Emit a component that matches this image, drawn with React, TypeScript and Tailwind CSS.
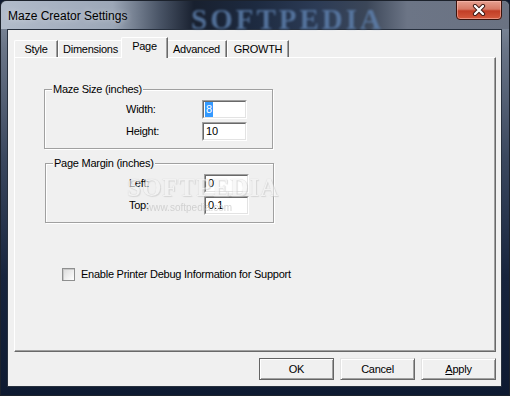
import React from 'react';

// Classic Win7 dialog: Maze Creator Settings, "Page" tab
const tabs = [
  { id: 'style', name: 'Style', w: 'w-[44px]' },
  { id: 'dim', name: 'Dimensions', w: 'w-[65px]' },
  { id: 'page', name: 'Page', w: 'w-[47px]' },
  { id: 'adv', name: 'Advanced', w: 'w-[61px]' },
  { id: 'growth', name: 'GROWTH', w: 'w-[62px]' },
];

function Field({ value, selected }: { value: string; selected?: boolean }) {
  return (
    <div className="w-[45px] h-[19px] border border-t-[#a0a0a0] border-l-[#a0a0a0] border-r-white border-b-white">
      <div className="w-full h-full border border-t-[#696969] border-l-[#696969] border-r-[#e3e3e3] border-b-[#e3e3e3] bg-white flex items-center pl-[1px] text-[11px] leading-none">
        {selected ? <span className="bg-[#3399ff] text-white px-[1px] py-[2px]">{value}</span> : <span className="px-[1px]">{value}</span>}
      </div>
    </div>
  );
}

function Row({ label, labelW, children }: { label: string; labelW: string; children: React.ReactNode }) {
  return (
    <div className="flex items-center">
      <span className={`${labelW} text-[11px] tracking-[-0.25px]`}>{label}</span>
      {children}
    </div>
  );
}

function GroupBox({ title, children, ml }: { title: string; children: React.ReactNode; ml: string }) {
  return (
    <div className={`relative ${ml} w-[229px] h-[60px] border border-[#a0a0a0] shadow-[inset_1px_1px_0_#fff,1px_1px_0_#fff]`}>
      <span className="absolute left-[7px] -top-[8px] bg-[#f0f0f0] px-[1px] text-[11px] tracking-[-0.25px] leading-[14px]">{title}</span>
      {children}
    </div>
  );
}

function Button({ label, isDefault }: { label: React.ReactNode; isDefault?: boolean }) {
  return (
    <div
      className={`w-[75px] h-[22px] flex items-center justify-center text-[11px] tracking-[-0.25px] bg-[#f0f0f0] ${
        isDefault
          ? 'border border-[#646464] shadow-[inset_1px_1px_0_#fff,inset_-1px_-1px_0_#a0a0a0]'
          : 'border border-t-[#e3e3e3] border-l-[#e3e3e3] border-r-[#696969] border-b-[#696969] shadow-[inset_1px_1px_0_#fff,inset_-1px_-1px_0_#a0a0a0]'
      }`}
    >
      {label}
    </div>
  );
}

export default function App() {
  return (
    <div className="w-[510px] h-[396px] overflow-hidden bg-[#0f1a30]">
      <div className="relative w-[510px] h-[396px] flex flex-col rounded-t-[6px] border border-[#1c222c] bg-[linear-gradient(180deg,#8a95a5_0%,#6a7587_12%,#3a475e_40%,#17243d_70%,#0e1a31_100%)] font-['Liberation_Sans',Arial,sans-serif] text-black">
        {/* title bar */}
        <div className="relative h-[28px] shrink-0 rounded-t-[6px] bg-[linear-gradient(90deg,#b2bccb_0%,#9ca7b7_22%,#4b5668_31%,#18202f_38%,#1d2a40_50%,#2c3b55_62%,#3b4658_72%,#6c7586_80%,#6a7282_100%)]">
          <span className="absolute left-[7px] top-[8px] text-[12px] leading-[14px] [text-shadow:0_0_6px_rgba(255,255,255,0.6)]">
            Maze Creator Settings
          </span>
          <span className="absolute left-[190px] -top-[3px] font-['Liberation_Serif',serif] font-bold text-[29px] tracking-[3px] text-[#5f82b0] opacity-80 blur-[1px]">
            SOFTPEDIA
          </span>
          <div className="absolute right-[7px] -top-[1px] w-[46px] h-[20px] rounded-b-[4px] border border-[#3b130c] bg-[linear-gradient(180deg,#e6a090_0%,#d77a66_45%,#c23e26_55%,#d45a3e_100%)] flex items-center justify-center shadow-[inset_0_0_0_1px_rgba(255,200,190,0.5)]">
            <svg width="14" height="12" viewBox="0 0 14 12">
              <path d="M3 2 L11 10 M11 2 L3 10" stroke="#3a1510" strokeWidth="4.2" strokeLinecap="round" />
              <path d="M3 2 L11 10 M11 2 L3 10" stroke="#fff" strokeWidth="2.4" strokeLinecap="round" />
            </svg>
          </div>
        </div>

        {/* client area */}
        <div className="ml-[6px] mr-[7px] mb-[8px] flex-1 flex flex-col border border-[#27303e] bg-[#f0f0f0]">
          {/* tab strip */}
          <div className="flex items-end h-[20px] mt-[7px] ml-[6px] relative z-10">
            {tabs.map((t) => {
              const active = t.id === 'page';
              return (
                <div
                  key={t.id}
                  className={`${t.w} flex items-center justify-center text-[11px] tracking-[-0.25px] rounded-tl-[2px] border-l border-t border-l-white border-t-white border-r border-r-[#696969] shadow-[inset_-1px_0_0_#a0a0a0] bg-[#f0f0f0] ${
                    active ? 'h-[21px] -mb-[1px] -mx-[2px] z-10 pb-[3px]' : 'h-[17px] pt-[1px]'
                  }`}
                >
                  {t.name}
                </div>
              );
            })}
          </div>

          {/* tab panel */}
          <div className="relative ml-[6px] mr-[5px] h-[295px] border-l border-t border-white border-r border-b border-r-[#696969] border-b-[#696969] shadow-[inset_-1px_-1px_0_#a0a0a0] pt-[31px]">
            <GroupBox title="Maze Size (inches)" ml="ml-[29px]">
              <div className="flex flex-col gap-[3px] pt-[10px] pl-[81px]">
                <Row label="Width:" labelW="w-[76px]">
                  <Field value="8" selected />
                </Row>
                <Row label="Height:" labelW="w-[76px]">
                  <Field value="10" />
                </Row>
              </div>
            </GroupBox>

            <div className="h-[14px]" />

            <GroupBox title="Page Margin (inches)" ml="ml-[30px]">
              <div className="flex flex-col gap-[3px] pt-[10px] pl-[83px]">
                <Row label="Left:" labelW="w-[75px]">
                  <Field value="0" />
                </Row>
                <Row label="Top:" labelW="w-[75px]">
                  <Field value="0.1" />
                </Row>
              </div>
            </GroupBox>

            <div className="flex items-center gap-[6px] ml-[47px] mt-[43px]">
              <div className="w-[13px] h-[13px] border border-[#8e8f8f] bg-[linear-gradient(135deg,#dadada,#ffffff)] shadow-[inset_1px_1px_0_#c8c8c8]" />
              <span className="text-[11px] tracking-[-0.25px]">Enable Printer Debug Information for Support</span>
            </div>

            {/* faint watermark over the margin fields */}
            <span className="absolute left-[112px] top-[111px] font-['Liberation_Serif',serif] font-bold text-[25px] tracking-[1px] text-[#f4f4f4] opacity-60 [text-shadow:0_0_1px_#a8a8a8,1px_1px_1px_#c8c8c8] pointer-events-none">
              SOFTPEDIA
            </span>
            <span className="absolute left-[131px] top-[142px] text-[10px] text-[#c4c4c4] opacity-70 pointer-events-none">
              www.softpedia.com
            </span>
          </div>

          {/* buttons */}
          <div className="flex justify-end gap-[6px] mt-[6px] mr-[5px]">
            <Button label="OK" isDefault />
            <Button label="Cancel" />
            <Button label={<span><span className="underline">A</span>pply</span>} />
          </div>
        </div>
      </div>
    </div>
  );
}
